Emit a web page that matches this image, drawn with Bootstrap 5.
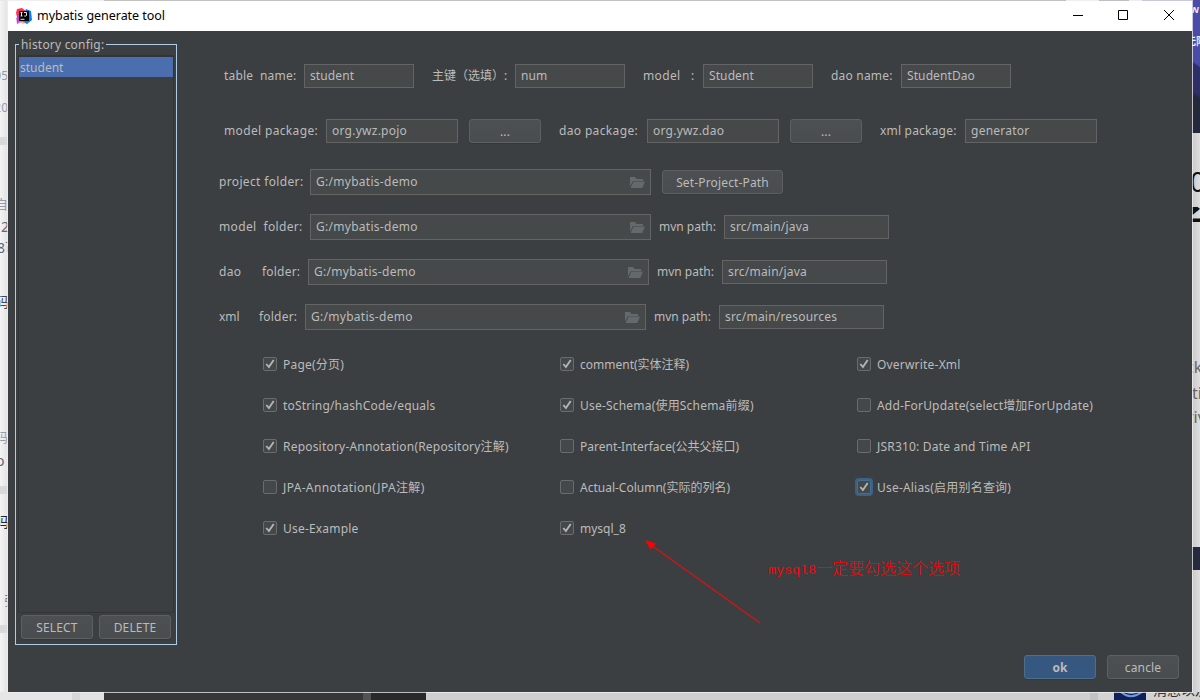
<!DOCTYPE html>
<html lang="zh-CN">
<head>
<meta charset="utf-8">
<meta name="viewport" content="width=device-width, initial-scale=1">
<title>mybatis generate tool</title>
<link href="https://cdn.jsdelivr.net/npm/bootstrap@5.3.0/dist/css/bootstrap.min.css" rel="stylesheet">
<style>
  body { width: 1200px; height: 700px; overflow: hidden; background: #e9e9e9; color: #bbb; font: 12px/16px "Noto Sans", "Noto Sans CJK SC", sans-serif; }
  /* desktop behind the dialog */
  .desktop { width: 1200px; height: 700px; overflow: hidden; }
  .strip-left { left: 0; top: 0; width: 8px; height: 700px; background: linear-gradient(90deg, #f4f4f5, #e2e2e3); }
  .strip-left i { position: absolute; left: 0; width: 8px; height: 8px; background: #d8d9dc; }
  .strip-right { left: 1192px; top: 0; width: 8px; height: 700px; background: linear-gradient(90deg, #c9c9c9, #dedede); }
  .banner { left: 0; top: 0; width: 8px; height: 133px; background: linear-gradient(215deg, #4b4ba8 0 54px, #2e2e68 56px 78px, #25273b 82px); }
  .band { left: 0; top: 547px; width: 8px; height: 23px; background: #27293d; }
  .peek { position: absolute; white-space: nowrap; line-height: 1; }
  .strip-top { left: 0; top: 0; width: 1200px; height: 1px; background: linear-gradient(90deg, #e8e8e8 104px, #38393b 104px 1066px, #e8e8e8 1066px 1099px, #2c2952 1099px 1129px, #e8e8e8 1129px 1142px, #4b4ba8 1142px); }
  .strip-bottom { left: 0; top: 692px; width: 1200px; height: 8px; background: linear-gradient(90deg, #e6e6e6 72px, #d6d7d9 72px 80px, #e2e2e2 80px 104px, #373737 104px 363px, #535353 363px 371px, #292929 371px 426px, #cfcfcf 426px 1090px, #c3c3c5 1090px 1098px, #d3d3d3 1098px); overflow: hidden; }
  .avatar { left: 1114px; top: -22px; }
  /* dialog */
  .dialog { margin: 1px 8px 0; width: 1184px; height: 691px; background: #3c3f41; box-shadow: 0 0 0 1px rgba(240,240,240,.75); letter-spacing: .2px; }
  .titlebar { height: 30px; background: #fff; color: #000; padding-left: 8px; font-size: 12.5px; letter-spacing: -.04px; }
  .winbtn { width: 46px; height: 30px; }
  .side { width: 162px; height: 601px; margin: 13px 0 0 7px; border: 1px solid #b1cbe6; padding: 10px 2px 0; }
  .side-title { left: 3px; top: -8px; background: #3c3f41; padding: 0 2px; height: 16px; }
  .side-list { height: 558px; border: 1px solid #323435; border-top-width: 2px; }
  .side-item { height: 20px; line-height: 21px; background: #4b6eaf; padding-left: 1px; letter-spacing: 0; }
  .tool-btn { height: 24px; border: 1px solid #5e6060; border-radius: 3px; background: linear-gradient(#4c5052, #4a4d4f); box-shadow: 0 1px 0 #36393b; padding: 0; color: #bbb; font-size: 12px; line-height: 23px; text-align: center; width: 72px; letter-spacing: .15px; }
  .ok-btn { background: #365880; border-color: #4c708c; font-weight: 700; }
  .field { height: 24px; min-height: 0; border: 1px solid #646464; border-radius: 0; background: #45494a; color: #bbb; padding: 0 5px; font-size: 12px; line-height: 21px; flex: none; letter-spacing: .1px; }
  .w-name { width: 110px; } .w-pack { width: 132px; letter-spacing: .25px; } .w-path { width: 165px; letter-spacing: .2px; } .w-folder { width: 341px; height: 26px; line-height: 23px; letter-spacing: .28px; padding-right: 4px; }
  .cap { white-space: pre; flex: none; line-height: 24px; }
  .wide { letter-spacing: .35px; }
  .tight { letter-spacing: 0; }
  .line { height: 26px; }
  .folders { row-gap: 19px; margin: 25px 0 0 31px; }
  .checks { width: 891px; margin: 27px 0 0 75px; display: grid; grid-template-columns: repeat(3, 297px); grid-auto-rows: 41px; }
  .opt { height: 14px; line-height: 16px; gap: 6px; white-space: nowrap; }
  .box { width: 14px; height: 14px; border: 1px solid #6b6b6b; border-radius: 2px; background: #43494a; flex: none; }
  .box.focus-on { border-color: #466d94; box-shadow: 0 0 0 2px #3d6185; }
  .box svg { display: block; }
  .note { left: 760px; top: 557px; height: 18px; letter-spacing: 0; color: #f00; font: 300 16px/18px "Noto Sans CJK SC", sans-serif; white-space: nowrap; }
  .note span { font: 13.33px/18px "Liberation Mono", monospace; }
  .arrow { left: 632px; top: 534px; }
</style>
</head>
<body>
<svg class="d-none">
  <symbol id="tick" viewBox="0 0 12 12"><path d="M2.300 6 4.900 9 9.700 2" fill="none" stroke="#b4b4b4" stroke-width="1.9"/></symbol>
  <symbol id="folder" viewBox="0 0 16 12"><path d="M0 0h5l1.500 2H13v2H3L0 9.500z" fill="#64696c"/><path d="M3.600 4.600H15L12.300 11H.6z" fill="#64696c"/></symbol>
</svg>
<div class="desktop position-relative">
  <div class="strip-left position-absolute overflow-hidden">
    <i style="top:137px"></i><i style="top:486px"></i><i style="top:625px"></i>
    <span class="peek" style="right:0;top:70px;color:#99a">05</span>
    <span class="peek" style="right:0;top:102px;color:#99a">20</span>
    <span class="peek" style="left:-5px;top:198px;color:#99a;font-size:13px">自</span>
    <span class="peek" style="left:1px;top:220px;color:#667;font-size:14px">2</span>
    <span class="peek" style="left:-3px;top:241px;color:#667;font-size:14px">8可</span>
    <span class="peek" style="left:-5px;top:295px;color:#445;font-size:14px">码</span>
    <span class="peek" style="left:-5px;top:431px;color:#99a;font-size:13px">码</span>
    <span class="peek" style="left:-4px;top:454px;color:#667;font-size:14px">o</span>
    <span class="peek" style="left:-5px;top:515px;color:#223;font-size:14px">吗</span>
    <span class="peek" style="left:4px;top:594px;color:#778;font-size:13px">张</span>
  </div>
  <div class="strip-right position-absolute overflow-hidden">
    <div class="banner position-absolute"></div><div class="band position-absolute"></div>
    <b class="peek fst-italic" style="left:0;top:5px;color:#eee;font-size:9px">N</b>
    <b class="peek" style="left:-6px;top:36px;color:#eee;font-size:10px">无限</b>
    <span class="peek" style="left:-2px;top:168px;color:#111;font-size:27px">0</span>
    <b class="peek" style="left:-18px;top:205px;color:#111;font-size:29px">子</b>
    <span class="peek" style="left:-6px;top:359px;color:#666;font-size:16px">ck</span>
    <span class="peek" style="left:0;top:385px;color:#666;font-size:16px">ti</span>
    <span class="peek" style="left:-5px;top:409px;color:#666;font-size:16px">riv</span>
  </div>
  <div class="strip-bottom position-absolute">
    <svg class="avatar position-absolute" width="32" height="32"><rect width="32" height="32" fill="#10205a"/><path d="M5 20q11 12 24 1M8 18q8 9 17 2" fill="none" stroke="#6b9bd8" stroke-width="2"/></svg>
    <span class="peek" style="left:1153px;top:-9px;color:#333;font-size:14px">消息以及</span>
  </div>
  <div class="strip-top position-absolute"></div>

  <div class="dialog position-absolute">
    <header class="titlebar d-flex align-items-center">
      <svg width="16" height="16" viewBox="0 0 16 16">
        <path d="M1 1 6 0l4 3-5 8-4 5V9L0 5z" fill="#fe315d"/><path d="M0 10 5 6l1 8-5 2z" fill="#b74af7" opacity=".7"/><path d="m10 1 5 2 1 9-5 4-6-3z" fill="#087cfa"/><path d="m4 12 4 0 2 3-4 1z" fill="#f97a12" opacity=".5"/>
        <rect x="3" y="3" width="10" height="10" fill="#000"/>
        <path d="M4.500 4.500h2M5.500 4.500v3.500M4.500 8h2M8 4.500h2.500V7.500q0 .8-2.300.5M4.500 11.300h4" fill="none" stroke="#fff" stroke-width=".9"/>
      </svg>
      <span style="margin-left:5px">mybatis generate tool</span>
      <div class="d-flex ms-auto">
        <svg class="winbtn" viewBox="0 0 46 30"><path d="M19 14.500h10" stroke="#000"/></svg>
        <svg class="winbtn" viewBox="0 0 46 30"><path d="M18.500 9.500h9v9h-9z" fill="none" stroke="#000"/></svg>
        <svg class="winbtn" viewBox="0 0 46 30"><path d="m18 9 10 10M28 9 18 19" stroke="#000"/></svg>
      </div>
    </header>
    <div class="d-flex">
      <aside class="side position-relative flex-shrink-0">
        <span class="side-title position-absolute">history config:</span>
        <div class="side-list"><div class="side-item">student</div></div>
        <div class="d-flex" style="gap:6px;padding:2px 0 0 3px">
          <button class="btn tool-btn">SELECT</button><button class="btn tool-btn">DELETE</button>
        </div>
      </aside>
      <main class="flex-grow-1" style="padding:32px 0 0 11px">
        <div class="line d-flex align-items-center" style="margin-left:36px">
          <span class="cap" style="width:80px">table  name:</span><div class="form-control field w-name">student</div>
          <span class="cap tight" style="width:83px;margin-left:18px">主键（选填）:</span><div class="form-control field w-name">num</div>
          <span class="cap wide" style="width:60px;margin-left:18px">model   :</span><div class="form-control field w-name">Student</div>
          <span class="cap" style="width:70px;margin-left:18px">dao name:</span><div class="form-control field w-name">StudentDao</div>
        </div>
        <div class="line d-flex align-items-center" style="margin:29px 0 0 36px">
          <span class="cap wide" style="width:102px">model package:</span><div class="form-control field w-pack">org.ywz.pojo</div>
          <button class="btn tool-btn" style="margin-left:11px">...</button>
          <span class="cap wide" style="width:88px;margin-left:18px">dao package:</span><div class="form-control field w-pack">org.ywz.dao</div>
          <button class="btn tool-btn" style="margin-left:11px">...</button>
          <span class="cap" style="width:85px;margin-left:18px">xml package:</span><div class="form-control field w-pack">generator</div>
        </div>
        <div class="d-grid folders">
          <div class="line d-flex align-items-center">
            <span class="cap wide" style="width:91px">project folder:</span><div class="form-control field w-folder d-flex justify-content-between">G:/mybatis-demo<svg width="16" height="12" style="margin:7px 0 0"><use href="#folder"/></svg></div>
            <button class="btn tool-btn" style="margin-left:11px;width:121px">Set-Project-Path</button>
          </div>
          <div class="line d-flex align-items-center">
            <span class="cap wide" style="width:91px">model  folder:</span><div class="form-control field w-folder d-flex justify-content-between">G:/mybatis-demo<svg width="16" height="12" style="margin:7px 0 0"><use href="#folder"/></svg></div>
            <span class="cap tight" style="width:65px;margin-left:8px">mvn path:</span><div class="form-control field w-path">src/main/java</div>
          </div>
          <div class="line d-flex align-items-center">
            <span class="cap wide" style="width:43px">dao</span><span class="cap" style="width:46px">folder:</span><div class="form-control field w-folder d-flex justify-content-between">G:/mybatis-demo<svg width="16" height="12" style="margin:7px 0 0"><use href="#folder"/></svg></div>
            <span class="cap tight" style="width:65px;margin-left:8px">mvn path:</span><div class="form-control field w-path">src/main/java</div>
          </div>
          <div class="line d-flex align-items-center">
            <span class="cap tight" style="width:40px">xml</span><span class="cap" style="width:46px">folder:</span><div class="form-control field w-folder d-flex justify-content-between">G:/mybatis-demo<svg width="16" height="12" style="margin:7px 0 0"><use href="#folder"/></svg></div>
            <span class="cap tight" style="width:65px;margin-left:8px">mvn path:</span><div class="form-control field w-path">src/main/resources</div>
          </div>
        </div>
        <div class="checks">
          <div class="opt d-flex"><span class="box"><svg width="12" height="12"><use href="#tick"/></svg></span>Page(分页)</div>
          <div class="opt d-flex tight"><span class="box"><svg width="12" height="12"><use href="#tick"/></svg></span>comment(实体注释)</div>
          <div class="opt d-flex"><span class="box"><svg width="12" height="12"><use href="#tick"/></svg></span>Overwrite-Xml</div>
          <div class="opt d-flex"><span class="box"><svg width="12" height="12"><use href="#tick"/></svg></span>toString/hashCode/equals</div>
          <div class="opt d-flex"><span class="box"><svg width="12" height="12"><use href="#tick"/></svg></span>Use-Schema(使用Schema前缀)</div>
          <div class="opt d-flex"><span class="box"></span>Add-ForUpdate(select增加ForUpdate)</div>
          <div class="opt d-flex"><span class="box"><svg width="12" height="12"><use href="#tick"/></svg></span>Repository-Annotation(Repository注解)</div>
          <div class="opt d-flex tight"><span class="box"></span>Parent-Interface(公共父接口)</div>
          <div class="opt d-flex"><span class="box"></span>JSR310: Date and Time API</div>
          <div class="opt d-flex wide"><span class="box"></span>JPA-Annotation(JPA注解)</div>
          <div class="opt d-flex tight"><span class="box"></span>Actual-Column(实际的列名)</div>
          <div class="opt d-flex"><span class="box focus-on"><svg width="12" height="12"><use href="#tick"/></svg></span>Use-Alias(启用别名查询)</div>
          <div class="opt d-flex"><span class="box"><svg width="12" height="12"><use href="#tick"/></svg></span>Use-Example</div>
          <div class="opt d-flex tight"><span class="box"><svg width="12" height="12"><use href="#tick"/></svg></span>mysql_8</div>
        </div>
        <div class="d-flex justify-content-end" style="gap:11px;margin:93px 13px 0 0">
          <button class="btn tool-btn ok-btn">ok</button><button class="btn tool-btn">cancle</button>
        </div>
      </main>
    </div>
    <div class="note position-absolute"><span>mysql8</span>一定要勾选这个选项</div>
    <svg class="arrow position-absolute" width="124" height="92"><path d="M11 10 120 88" stroke="#e01010" stroke-width="1.1"/><path d="m5 5 11 3.500-5.500 6z" fill="#f00"/></svg>
  </div>
</div>
<script src="https://cdn.jsdelivr.net/npm/bootstrap@5.3.0/dist/js/bootstrap.bundle.min.js"></script>
</body>
</html>
